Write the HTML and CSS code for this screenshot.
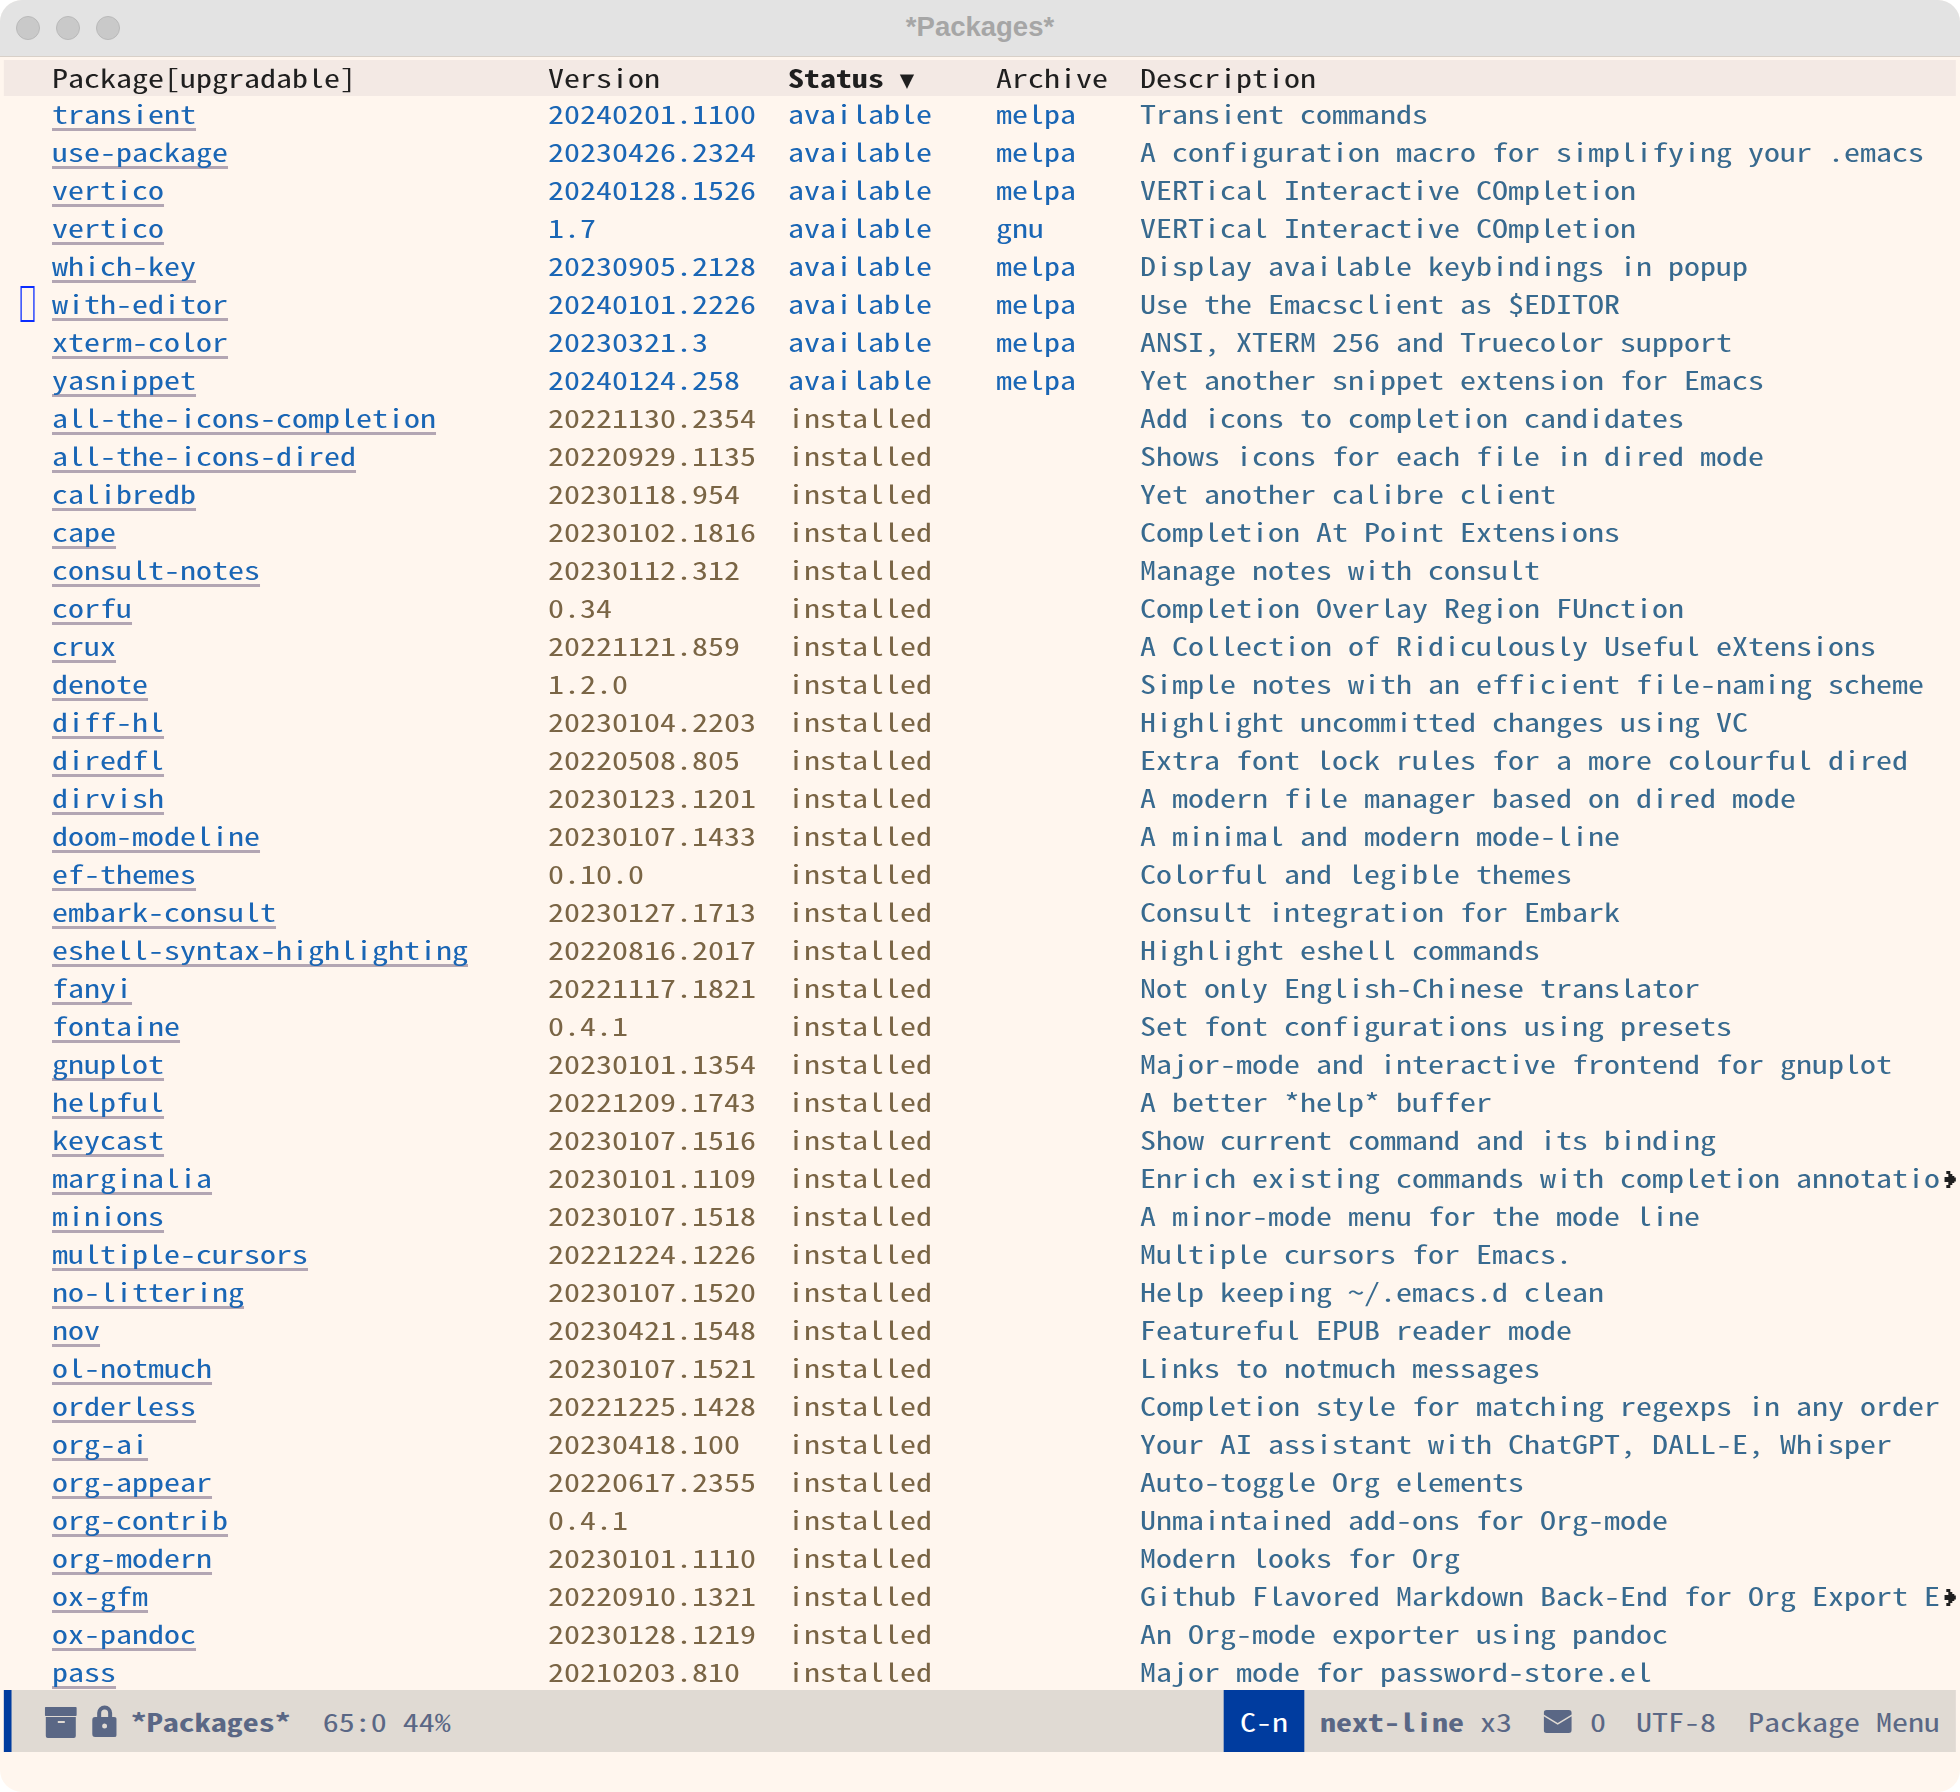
FILE: index.html
```html
<!DOCTYPE html>
<html lang="en">
<head>
  <meta charset="UTF-8">
  <title>*Packages*</title>
  <link rel="stylesheet" href="styles.css">
</head>
<body>
  <div class="window">
    <div class="titlebar">
      <div class="lights"><span></span><span></span><span></span></div>
      <div class="title">*Packages*</div>
    </div>

    <div class="buffer">
    <div class="row head">
      <span>Package[upgradable]</span>
      <span>Version</span>
      <span class="sorted">Status <i>▼</i></span>
      <span>Archive</span>
      <span>Description</span>
    </div>

    <div class="list">
      <div class="row avail"><a>transient</a><span>20240201.1100</span><span>available</span><span>melpa</span><span class="desc">Transient commands</span></div>
      <div class="row avail"><a>use-package</a><span>20230426.2324</span><span>available</span><span>melpa</span><span class="desc">A configuration macro for simplifying your .emacs</span></div>
      <div class="row avail"><a>vertico</a><span>20240128.1526</span><span>available</span><span>melpa</span><span class="desc">VERTical Interactive COmpletion</span></div>
      <div class="row avail"><a>vertico</a><span>1.7</span><span>available</span><span>gnu</span><span class="desc">VERTical Interactive COmpletion</span></div>
      <div class="row avail"><a>which-key</a><span>20230905.2128</span><span>available</span><span>melpa</span><span class="desc">Display available keybindings in popup</span></div>
      <div class="row avail"><b class="cursor"></b><a>with-editor</a><span>20240101.2226</span><span>available</span><span>melpa</span><span class="desc">Use the Emacsclient as $EDITOR</span></div>
      <div class="row avail"><a>xterm-color</a><span>20230321.3</span><span>available</span><span>melpa</span><span class="desc">ANSI, XTERM 256 and Truecolor support</span></div>
      <div class="row avail"><a>yasnippet</a><span>20240124.258</span><span>available</span><span>melpa</span><span class="desc">Yet another snippet extension for Emacs</span></div>
      <div class="row"><a>all-the-icons-completion</a><span>20221130.2354</span><span>installed</span><span></span><span class="desc">Add icons to completion candidates</span></div>
      <div class="row"><a>all-the-icons-dired</a><span>20220929.1135</span><span>installed</span><span></span><span class="desc">Shows icons for each file in dired mode</span></div>
      <div class="row"><a>calibredb</a><span>20230118.954</span><span>installed</span><span></span><span class="desc">Yet another calibre client</span></div>
      <div class="row"><a>cape</a><span>20230102.1816</span><span>installed</span><span></span><span class="desc">Completion At Point Extensions</span></div>
      <div class="row"><a>consult-notes</a><span>20230112.312</span><span>installed</span><span></span><span class="desc">Manage notes with consult</span></div>
      <div class="row"><a>corfu</a><span>0.34</span><span>installed</span><span></span><span class="desc">Completion Overlay Region FUnction</span></div>
      <div class="row"><a>crux</a><span>20221121.859</span><span>installed</span><span></span><span class="desc">A Collection of Ridiculously Useful eXtensions</span></div>
      <div class="row"><a>denote</a><span>1.2.0</span><span>installed</span><span></span><span class="desc">Simple notes with an efficient file-naming scheme</span></div>
      <div class="row"><a>diff-hl</a><span>20230104.2203</span><span>installed</span><span></span><span class="desc">Highlight uncommitted changes using VC</span></div>
      <div class="row"><a>diredfl</a><span>20220508.805</span><span>installed</span><span></span><span class="desc">Extra font lock rules for a more colourful dired</span></div>
      <div class="row"><a>dirvish</a><span>20230123.1201</span><span>installed</span><span></span><span class="desc">A modern file manager based on dired mode</span></div>
      <div class="row"><a>doom-modeline</a><span>20230107.1433</span><span>installed</span><span></span><span class="desc">A minimal and modern mode-line</span></div>
      <div class="row"><a>ef-themes</a><span>0.10.0</span><span>installed</span><span></span><span class="desc">Colorful and legible themes</span></div>
      <div class="row"><a>embark-consult</a><span>20230127.1713</span><span>installed</span><span></span><span class="desc">Consult integration for Embark</span></div>
      <div class="row"><a>eshell-syntax-highlighting</a><span>20220816.2017</span><span>installed</span><span></span><span class="desc">Highlight eshell commands</span></div>
      <div class="row"><a>fanyi</a><span>20221117.1821</span><span>installed</span><span></span><span class="desc">Not only English-Chinese translator</span></div>
      <div class="row"><a>fontaine</a><span>0.4.1</span><span>installed</span><span></span><span class="desc">Set font configurations using presets</span></div>
      <div class="row"><a>gnuplot</a><span>20230101.1354</span><span>installed</span><span></span><span class="desc">Major-mode and interactive frontend for gnuplot</span></div>
      <div class="row"><a>helpful</a><span>20221209.1743</span><span>installed</span><span></span><span class="desc">A better *help* buffer</span></div>
      <div class="row"><a>keycast</a><span>20230107.1516</span><span>installed</span><span></span><span class="desc">Show current command and its binding</span></div>
      <div class="row"><a>marginalia</a><span>20230101.1109</span><span>installed</span><span></span><span class="desc">Enrich existing commands with completion annotatio</span><svg class="more" viewBox="0 0 12 17" preserveAspectRatio="none"><path d="M2 0h4v3h2v2h2v1.500h2v4h-2V12H8v2H6v3H2v-3h2v-3H0V6h4V3H2z"/></svg></div>
      <div class="row"><a>minions</a><span>20230107.1518</span><span>installed</span><span></span><span class="desc">A minor-mode menu for the mode line</span></div>
      <div class="row"><a>multiple-cursors</a><span>20221224.1226</span><span>installed</span><span></span><span class="desc">Multiple cursors for Emacs.</span></div>
      <div class="row"><a>no-littering</a><span>20230107.1520</span><span>installed</span><span></span><span class="desc">Help keeping ~/.emacs.d clean</span></div>
      <div class="row"><a>nov</a><span>20230421.1548</span><span>installed</span><span></span><span class="desc">Featureful EPUB reader mode</span></div>
      <div class="row"><a>ol-notmuch</a><span>20230107.1521</span><span>installed</span><span></span><span class="desc">Links to notmuch messages</span></div>
      <div class="row"><a>orderless</a><span>20221225.1428</span><span>installed</span><span></span><span class="desc">Completion style for matching regexps in any order</span></div>
      <div class="row"><a>org-ai</a><span>20230418.100</span><span>installed</span><span></span><span class="desc">Your AI assistant with ChatGPT, DALL-E, Whisper</span></div>
      <div class="row"><a>org-appear</a><span>20220617.2355</span><span>installed</span><span></span><span class="desc">Auto-toggle Org elements</span></div>
      <div class="row"><a>org-contrib</a><span>0.4.1</span><span>installed</span><span></span><span class="desc">Unmaintained add-ons for Org-mode</span></div>
      <div class="row"><a>org-modern</a><span>20230101.1110</span><span>installed</span><span></span><span class="desc">Modern looks for Org</span></div>
      <div class="row"><a>ox-gfm</a><span>20220910.1321</span><span>installed</span><span></span><span class="desc">Github Flavored Markdown Back-End for Org Export E</span><svg class="more" viewBox="0 0 12 17" preserveAspectRatio="none"><path d="M2 0h4v3h2v2h2v1.500h2v4h-2V12H8v2H6v3H2v-3h2v-3H0V6h4V3H2z"/></svg></div>
      <div class="row"><a>ox-pandoc</a><span>20230128.1219</span><span>installed</span><span></span><span class="desc">An Org-mode exporter using pandoc</span></div>
      <div class="row"><a>pass</a><span>20210203.810</span><span>installed</span><span></span><span class="desc">Major mode for password-store.el</span></div>
    </div>

    <div class="modeline">
      <div class="ml-left">
        <svg class="icon-archive" viewBox="0 0 32 31" preserveAspectRatio="none"><path d="M0 1a1 1 0 0 1 1-1h30a1 1 0 0 1 1 1v7a1 1 0 0 1-1 1H1a1 1 0 0 1-1-1zM1 10h30v19a2 2 0 0 1-2 2H3a2 2 0 0 1-2-2zm12 4v2h7v-2z" fill-rule="evenodd"/></svg>
        <svg class="icon-lock" viewBox="0 0 25 32" preserveAspectRatio="none"><path d="M5 12V8a7.500 7.500 0 0 1 15 0v4h2a3 3 0 0 1 3 3v14a3 3 0 0 1-3 3H3a3 3 0 0 1-3-3V15a3 3 0 0 1 3-3zm4 0h7V8a3.500 3.500 0 0 0-7 0zm3.500 6.500a2.500 2.500 0 1 0 0 5 2.500 2.500 0 0 0 0-5z" fill-rule="evenodd"/></svg>
        <strong class="buf">*Packages*</strong>
        <span>65:0 44%</span>
      </div>
      <div class="ml-right">
        <span class="key">C-n</span>
        <span><strong>next-line</strong> x3</span>
        <svg class="icon-mail" viewBox="0 0 28 23" preserveAspectRatio="none"><path d="M3 0h22a3 3 0 0 1 3 3v1.500L14 13 0 4.500V3a3 3 0 0 1 3-3zM0 6.200l14 8.500 14-8.500V20a3 3 0 0 1-3 3H3a3 3 0 0 1-3-3z"/></svg>
        <span class="count">0</span>
        <span class="enc">UTF-8</span>
        <span class="mode">Package Menu</span>
      </div>
    </div>
    </div>
  </div>
</body>
</html>
```

FILE: styles.css
```css
html, body {
  margin: 0;
  padding: 0;
  background-color: #fff;
}

.window {
  width: 1960px;
  height: 1792px;
  border-radius: 22px;
  overflow: hidden;
  background-color: #fff6ee;
  color: #1f1f1f;
}

/* title bar */
.titlebar {
  height: 56px;
  display: flex;
  align-items: center;
  justify-content: center;
  position: relative;
  background-color: #e3e3e3;
  border-bottom: 1px solid #d8d0c8;
  margin-bottom: 3px;
}

.lights {
  position: absolute;
  left: 16px;
  top: 16px;
  display: flex;
  gap: 16px;
}

.lights span {
  width: 22px;
  height: 22px;
  border: 1px solid #b9b9b9;
  border-radius: 50%;
  background-color: #c9c9c9;
}

.title {
  font-family: "Liberation Sans", sans-serif;
  font-weight: bold;
  font-size: 27.5px;
  color: #a6a6a6;
  margin-bottom: 2px;
}

/* the mono font is a half-width one, so the whole buffer gets stretched
   to the 16px cell. every width below is real px / 1.28 */
.buffer {
  width: 1531.25px;
  transform: scaleX(1.28);
  transform-origin: left top;
  font-family: "Noto Sans Mono CJK SC", "Liberation Mono", monospace;
  font-size: 25px;
  line-height: 30px;
}

/* table rows */
.row {
  display: grid;
  grid-template-columns: 387.5px 187.5px 162.5px 112.5px 628.125px 9.375px;
  align-items: center;
  box-sizing: border-box;
  height: 38px;
  padding-left: 40.625px;
  padding-bottom: 4px;
  white-space: pre;
  position: relative;
  color: #7a6545;
}

.row a {
  color: #1a66b5;
  justify-self: start;
  text-decoration: underline #b3a6b3 3px;
  text-decoration-skip-ink: none;
  text-underline-offset: 4px;
}

.row .desc {
  color: #386a8f;
}

.row.avail {
  color: #1a66b5;
}

.head {
  height: 36px;
  margin: 0 3.125px;
  padding-left: 37.5px;
  padding-bottom: 2px;
  grid-template-columns: 387.5px 187.5px 162.5px 112.5px 1fr;
  background-color: #f3e9e4;
  color: #1f1f1f;
}

.sorted {
  font-weight: bold;
}

.sorted i {
  display: inline-block;
  font-family: "DejaVu Sans Mono", monospace;
  font-size: 24px;
  line-height: 1;
  font-style: normal;
  font-weight: normal;
  transform: scaleX(0.78);
  transform-origin: left center;
}

.list {
  height: 1594px;
  overflow: hidden;
}

.cursor {
  position: absolute;
  left: 15.625px;
  top: 0;
  width: 9.375px;
  height: 32px;
  border: solid #0a2cff;
  border-width: 2px 1.5625px;
}

.more {
  width: 9.375px;
  height: 17px;
  margin-top: 4px;
  fill: #1f1f1f;
}

/* mode line */
.modeline {
  height: 62px;
  margin: 0 3.125px;
  display: flex;
  justify-content: space-between;
  align-items: center;
  background-color: #e0dad3;
  border-left: 6.25px solid #003c9f;
  color: #5a6785;
}

.modeline svg {
  fill: #5a6785;
  flex: none;
}

.ml-left,
.ml-right {
  display: flex;
  align-items: center;
  height: 100%;
}

.icon-archive {
  width: 25px;
  height: 31px;
  margin-left: 25.78px;
  margin-top: 3px;
}

.icon-lock {
  width: 19.53px;
  height: 32px;
  margin-left: 11.72px;
}

.buf {
  margin-left: 10.94px;
  margin-right: 25px;
}

.key {
  align-self: stretch;
  display: flex;
  align-items: center;
  padding: 0 12.5px;
  margin-right: 12.5px;
  background-color: #003c9f;
  color: #fff;
}

.icon-mail {
  width: 21.875px;
  height: 23px;
  margin-left: 25px;
}

.count {
  margin-left: 14.06px;
}

.enc {
  margin-left: 23.44px;
}

.mode {
  margin-left: 25px;
  margin-right: 12.5px;
}
```
